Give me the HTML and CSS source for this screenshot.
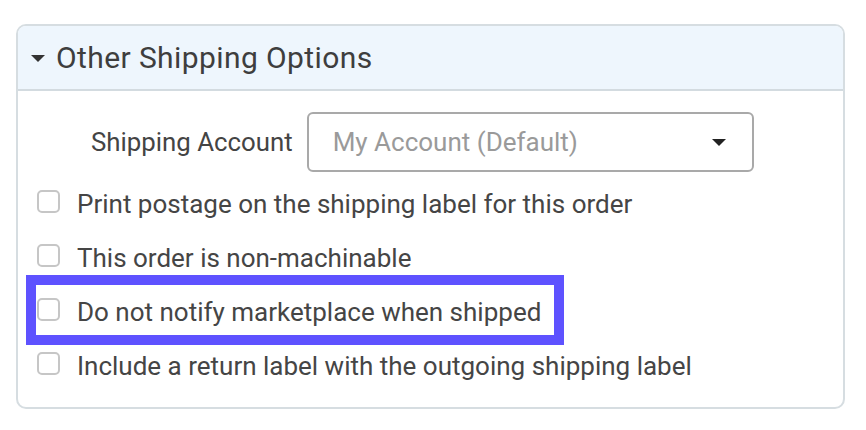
FILE: index.html
```html
<!DOCTYPE html>
<html>
<head>
<meta charset="utf-8">
<link rel="stylesheet" href="styles.css">
</head>
<body>
<div class="panel">
  <div class="panel-header">
    <span class="caret"></span>
    <span class="title">Other Shipping Options</span>
  </div>
  <div class="panel-body">
    <div class="account-row">
      <span class="account-label">Shipping Account</span>
      <div class="select">
        <span class="select-text">My Account (Default)</span>
        <span class="select-caret"></span>
      </div>
    </div>
    <label class="check-row"><span class="box"></span><span class="check-text">Print postage on the shipping label for this order</span></label>
    <label class="check-row"><span class="box"></span><span class="check-text">This order is non-machinable</span></label>
    <label class="check-row highlighted"><span class="box"></span><span class="check-text">Do not notify marketplace when shipped</span><span class="highlight"></span></label>
    <label class="check-row"><span class="box"></span><span class="check-text">Include a return label with the outgoing shipping label</span></label>
  </div>
</div>
</body>
</html>
```

FILE: styles.css
```css
html, body {
  margin: 0;
  padding: 0;
  background: #ffffff;
}
body {
  font-family: Roboto, "Liberation Sans", sans-serif;
  color: #444444;
  padding: 24px 0 0 16px;
}
.panel {
  width: 825px;
  height: 381px;
  border: 2px solid #d6dde1;
  border-radius: 10px;
  overflow: hidden;
}
.panel-header {
  height: 63px;
  background: #eef6fd;
  border-bottom: 2px solid #d3dbe0;
  display: flex;
  align-items: center;
  padding-left: 13px;
}
.caret {
  width: 0;
  height: 0;
  border-left: 7px solid transparent;
  border-right: 7px solid transparent;
  border-top: 7px solid #333333;
  margin-right: 11px;
  margin-top: 1px;
}
.title {
  font-size: 30px;
  color: #3e3e3e;
  letter-spacing: 0.4px;
}
.panel-body {
  padding-top: 21px;
  position: relative;
}
.account-row {
  display: flex;
  align-items: center;
  padding-left: 73px;
  height: 60px;
  margin-bottom: 5px;
}
.account-label {
  font-size: 25.8px;
  color: #444444;
  margin-right: 14px;
}
.select {
  display: flex;
  align-items: center;
  justify-content: space-between;
  padding: 0 26px 0 24px;
  box-sizing: border-box;
  height: 60px;
  width: 447px;
  border: 2px solid #a9a9a9;
  border-radius: 6px;
}
.select-text {
  font-size: 26px;
  color: #9a9a9a;
}
.select-caret {
  width: 0;
  height: 0;
  border-left: 7px solid transparent;
  border-right: 7px solid transparent;
  border-top: 7px solid #222222;
}
.check-row {
  display: flex;
  align-items: center;
  height: 54px;
  padding-left: 19px;
  position: relative;
}
.box {
  width: 23px;
  height: 23px;
  box-sizing: border-box;
  border: 2px solid #c6c6c6;
  border-radius: 5px;
  margin-right: 17px;
  margin-top: -5px;
  flex: none;
}
.check-text {
  font-size: 26px;
  color: #454545;
}
.highlight {
  position: absolute;
  left: 8px;
  top: -10px;
  width: 538px;
  height: 70px;
  box-sizing: border-box;
  border: 10px solid #5e52ff;
  pointer-events: none;
}
```
